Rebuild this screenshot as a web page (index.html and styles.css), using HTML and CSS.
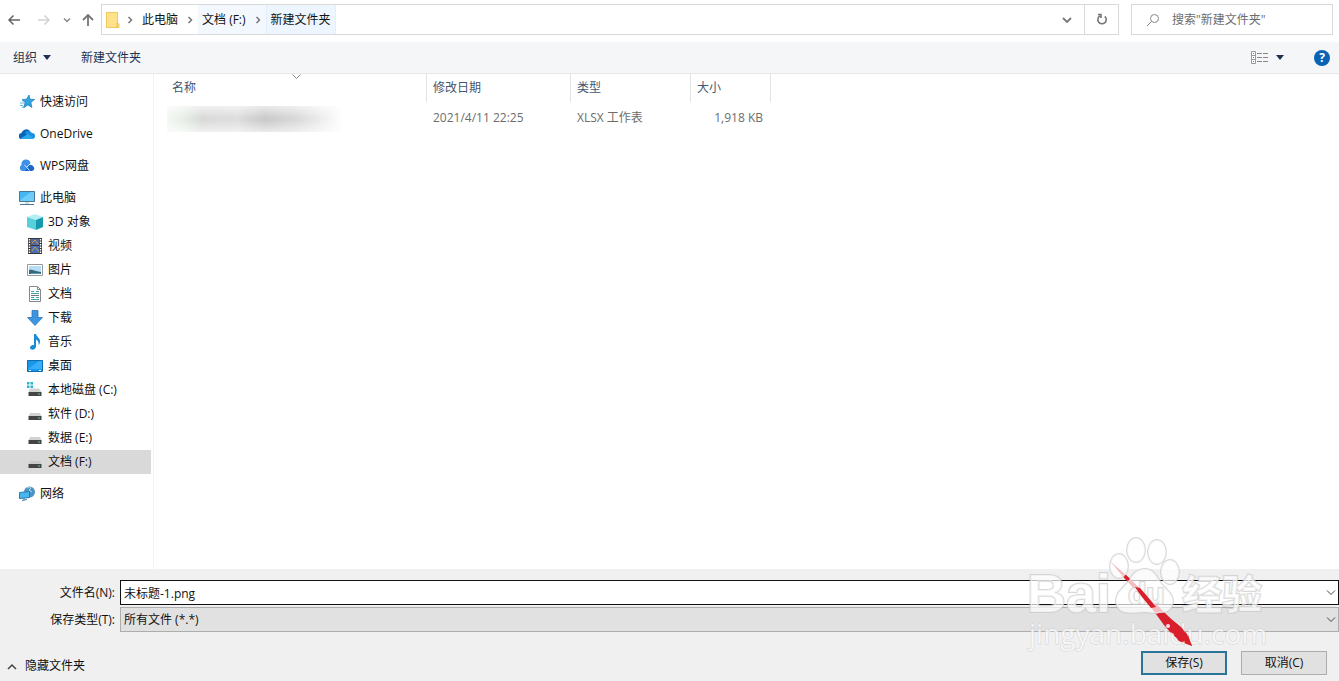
FILE: index.html
```html
<!DOCTYPE html>
<html lang="zh-CN">
<head>
    <meta charset="UTF-8">
    <meta name="viewport" content="width=device-width, initial-scale=1.0">
    <title>另存为</title>
    <link rel="stylesheet" href="styles.css">
</head>
<body>
    <header class="nav-bar">
        <div class="nav-buttons">
            <button class="icon-btn" aria-label="后退"><svg width="14" height="14" viewBox="0 0 14 14"><path d="M13 7H2M6.500 2.500L2 7l4.500 4.500" fill="none" stroke="#666" stroke-width="1.500"/></svg></button>
            <button class="icon-btn" aria-label="前进"><svg width="14" height="14" viewBox="0 0 14 14"><path d="M1 7h11M7.500 2.500L12 7l-4.500 4.500" fill="none" stroke="#d2d2d2" stroke-width="1.500"/></svg></button>
            <button class="icon-btn small" aria-label="最近浏览的位置"><svg width="8" height="8" viewBox="0 0 8 8"><path d="M1 2.500l3 3 3-3" fill="none" stroke="#888" stroke-width="1.500"/></svg></button>
            <button class="icon-btn" aria-label="上移"><svg width="14" height="14" viewBox="0 0 14 14"><path d="M7 13V2M2 7l5-5 5 5" fill="none" stroke="#777" stroke-width="1.800"/></svg></button>
        </div>
        <div class="address">
            <svg class="folder" width="14" height="18" viewBox="0 0 14 18"><path d="M.5 1.500h11v10.500l1.500 1v3.500H.5z" fill="#ffe28a" stroke="#eec85c"/><path d="M11 12v4.500" stroke="#e0b84e"/></svg>
            <nav class="crumbs">
                <svg class="sep" width="6" height="8" viewBox="0 0 6 8"><path d="M1.500 1l3 3-3 3" fill="none" stroke="#777" stroke-width="1.500"/></svg>
                <button class="crumb">此电脑</button>
                <svg class="sep" width="6" height="8" viewBox="0 0 6 8"><path d="M1.500 1l3 3-3 3" fill="none" stroke="#777" stroke-width="1.500"/></svg>
                <button class="crumb lit">文档 (F:)</button>
                <span class="sep-box"><svg width="6" height="8" viewBox="0 0 6 8"><path d="M1.500 1l3 3-3 3" fill="none" stroke="#777" stroke-width="1.500"/></svg></span>
                <button class="crumb active">新建文件夹</button>
            </nav>
            <button class="addr-drop" aria-label="以前的位置"><svg width="10" height="8" viewBox="0 0 10 8"><path d="M1 2l4 4 4-4" fill="none" stroke="#777" stroke-width="1.800"/></svg></button>
            <button class="refresh" aria-label="刷新"><svg width="12" height="13" viewBox="0 0 12 13"><path d="M8.800 3.400A4.200 4.200 0 1 1 4 2.900M2 1.500h3v3.500" fill="none" stroke="#777" stroke-width="1.600"/></svg></button>
        </div>
        <label class="search">
            <svg width="14" height="14" viewBox="0 0 14 14"><circle cx="8.500" cy="5.500" r="4" fill="none" stroke="#888"/><path d="M5.500 8.500L1 13" stroke="#888"/></svg>
            <input type="text" placeholder='搜索"新建文件夹"' aria-label="搜索">
        </label>
    </header>

    <div class="toolbar">
        <button class="tool">组织 <svg width="8" height="5" viewBox="0 0 8 5"><path d="M0 0h8L4 5z" fill="#1e3250"/></svg></button>
        <button class="tool">新建文件夹</button>
        <span class="spacer"></span>
        <button class="tool view" aria-label="更改视图">
            <svg width="17" height="13" viewBox="0 0 17 13"><path d="M.5.500h4v12h-4zM.5 4.500h4M.5 8.500h4" fill="#fff" stroke="#999"/><path d="M2 2.500h1M2 6.500h1M2 10.500h1" stroke="#777"/><path d="M6 2.500h5M12 2.500h5M6 6.500h5M12 6.500h5M6 10.500h5M12 10.500h5" stroke="#888"/></svg>
            <svg width="8" height="5" viewBox="0 0 8 5"><path d="M0 0h8L4 5z" fill="#1e3250"/></svg>
        </button>
        <button class="help" aria-label="帮助">?</button>
    </div>

    <main class="content">
        <aside class="sidebar">
            <ul class="group">
                <li><a class="place" href="#"><svg width="16" height="16" viewBox="0 0 16 16"><path d="M10 1l1 4.200 4.700.3-3.800 2.800 1 5.200-4-2.600-4.200 2.800 1.400-5.100L3 5.700l4.500-.5z" fill="#2fa4e0" stroke="#1778b5" stroke-width=".7"/><path d="M1 9h4M1 11.500h3M3 14l2-2" stroke="#62bce8"/></svg>快速访问</a></li>
            </ul>
            <ul class="group">
                <li><a class="place" href="#"><svg width="16" height="16" viewBox="0 0 16 16"><path d="M3 13a3 3 0 0 1-.5-6A5 5 0 0 1 11 5l2 8z" fill="#0b63b8"/><path d="M6 6a5 5 0 0 1 7 1 3 3 0 0 1 0 6H9z" fill="#1b91df"/><path d="M2 12l7-4 5.500 4.300-1.500.7H3z" fill="#29a8ea"/></svg>OneDrive</a></li>
            </ul>
            <ul class="group">
                <li><a class="place" href="#"><svg width="16" height="16" viewBox="0 0 16 16"><path d="M3 13a3.300 3.300 0 0 1-.5-6 4.500 4.500 0 0 1 9-2L7 13z" fill="#3d91ec"/><path d="M6 13l3-5a3.500 3.500 0 0 1 6 1.500A2.500 2.500 0 0 1 13 13z" fill="#1769c9"/><path d="M5.500 7l5 5.500M8 9l3-3" fill="none" stroke="#d8edff"/></svg>WPS网盘</a></li>
            </ul>
            <ul class="group">
                <li><a class="place" href="#"><svg width="16" height="16" viewBox="0 0 16 16"><path d="M.5 1.500h15v10H.5z" fill="#43b7f2" stroke="#477994"/><path d="M1 10L12 2h3v9H1z" fill="#6dccfa"/><path d="M1 14.500h14" stroke="#477994"/><path d="M6 13h4" stroke="#a8b9c4"/></svg>此电脑</a></li>
                <li><a class="place child" href="#"><svg width="16" height="16" viewBox="0 0 16 16"><path d="M0 3l8-3 8 3-7 3z" fill="#b3eef3"/><path d="M0 3l9 3v10l-9-3z" fill="#57d0dc"/><path d="M16 3L9 6v10l7-3z" fill="#1698ad"/></svg>3D 对象</a></li>
                <li><a class="place child" href="#"><svg width="16" height="16" viewBox="0 0 16 16"><path d="M1 0h14v16H1z" fill="#38363b"/><path d="M4 1h8v6H4z" fill="#58669e"/><path d="M4 8h8v7H4z" fill="#486dba"/><path d="M5 5l3-3 3 4M5 13l3-4 4 5" stroke="#c7a245" fill="none"/><path d="M2.500 1v14M13.500 1v14" stroke="#fff" stroke-width="1.500" stroke-dasharray="1.500 1"/></svg>视频</a></li>
                <li><a class="place child" href="#"><svg width="16" height="16" viewBox="0 0 16 16"><path d="M.5 2.500h15v11H.5z" fill="#fff" stroke="#999"/><path d="M2 4h12v8H2z" fill="#b5ddf5"/><path d="M2 8c3-1 5 1 12 2v2H2z" fill="#386879"/><path d="M4 11.500h9" stroke="#5599b5"/></svg>图片</a></li>
                <li><a class="place child" href="#"><svg width="16" height="16" viewBox="0 0 16 16"><path d="M2.500.500h8l3 3v12h-11z" fill="#fff" stroke="#888"/><path d="M10.500.500v3h3" fill="none" stroke="#888"/><path d="M4 5.500h3M9 5.500h3M4 7.500h8M4 11.500h3M9 11.500h3M4 13.500h8" stroke="#47a0ac"/><path d="M4 9.500h8" stroke="#777"/></svg>文档</a></li>
                <li><a class="place child" href="#"><svg width="16" height="16" viewBox="0 0 16 16"><path d="M5 .500h6v7h4.500L8 15.500.5 7.500H5z" fill="#3e94df" stroke="#2777be" stroke-width=".8"/></svg>下载</a></li>
                <li><a class="place child" href="#"><svg width="16" height="16" viewBox="0 0 16 16"><path d="M7 0h2c.5 3 4.500 4 4 8-.2 1.500-1 2.500-1.500 3 .5-3-1-5-2.500-5.500v7C9 15 6.500 16 4.500 15.500S2.500 12 5 11.200c1-.4 1.500-.2 2 0z" fill="#178bd8"/></svg>音乐</a></li>
                <li><a class="place child" href="#"><svg width="16" height="16" viewBox="0 0 16 16"><path d="M.5 2.500h15v11H.5z" fill="#1997e8" stroke="#116cae"/><path d="M1 11L12 3h3v8z" fill="#36aefa"/><path d="M2 12.500h2M12 12.500h2" stroke="#fff"/></svg>桌面</a></li>
                <li><a class="place child" href="#"><svg width="16" height="16" viewBox="0 0 16 16"><path d="M3 6.500h9l2.500 3.500H1.500z" fill="#d2d2d2"/><path d="M0 0h2.500v2.500H0zM3.500 0H6v2.500H3.500zM0 3.500h2.500V6H0zM3.500 3.500H6V6H3.500z" fill="#24b5d0"/><path d="M1.500 10h13v4h-13z" fill="#444"/><path d="M11 12h2" stroke="#52df79"/></svg>本地磁盘 (C:)</a></li>
                <li><a class="place child" href="#"><svg width="16" height="16" viewBox="0 0 16 16"><path d="M3 7h10l1.500 3.500h-13z" fill="#d2d2d2"/><path d="M1.500 10h13v4h-13z" fill="#444"/><path d="M11 12h2" stroke="#52df79"/></svg>软件 (D:)</a></li>
                <li><a class="place child" href="#"><svg width="16" height="16" viewBox="0 0 16 16"><path d="M3 7h10l1.500 3.500h-13z" fill="#d2d2d2"/><path d="M1.500 10h13v4h-13z" fill="#444"/><path d="M11 12h2" stroke="#52df79"/></svg>数据 (E:)</a></li>
                <li><a class="place child selected" href="#"><svg width="16" height="16" viewBox="0 0 16 16"><path d="M3 7h10l1.500 3.500h-13z" fill="#cacaca"/><path d="M1.500 10h13v4h-13z" fill="#444"/><path d="M11 12h2" stroke="#52df79"/></svg>文档 (F:)</a></li>
            </ul>
            <ul class="group">
                <li><a class="place" href="#"><svg width="16" height="16" viewBox="0 0 16 16"><circle cx="10.500" cy="6" r="5.500" fill="#4d94c3"/><path d="M8 2c2-1 3-1 4 0l-2 2 3 2" stroke="#b5daed" fill="none"/><path d="M.5 6.500l10-1v6l-10 1z" fill="#48b7f0" stroke="#287dac"/><path d="M3 14.500l5-1M5 12v2" stroke="#477d9c"/></svg>网络</a></li>
            </ul>
        </aside>

        <section class="files">
            <svg class="sort" width="9" height="5" viewBox="0 0 9 5"><path d="M.5.500l4 4 4-4" fill="none" stroke="#888"/></svg>
            <table class="file-table">
                <thead>
                    <tr><th class="col-name">名称</th><th class="col-date">修改日期</th><th class="col-type">类型</th><th class="col-size">大小</th></tr>
                </thead>
                <tbody>
                    <tr><td class="name-cell"><div class="smudge"></div></td><td>2021/4/11 22:25</td><td>XLSX 工作表</td><td class="size">1,918 KB</td></tr>
                </tbody>
            </table>
        </section>
    </main>

    <footer class="save-panel">
        <div class="field">
            <label for="filename">文件名(N):</label>
            <div class="combo">
                <input type="text" id="filename" value="未标题-1.png">
                <svg class="chev" width="10" height="6" viewBox="0 0 10 6"><path d="M1 .500l4 4 4-4" fill="none" stroke="#444"/></svg>
            </div>
        </div>
        <div class="field">
            <label for="filetype">保存类型(T):</label>
            <div class="combo">
                <select id="filetype"><option>所有文件 (*.*)</option></select>
                <svg class="chev" width="10" height="6" viewBox="0 0 10 6"><path d="M1 .500l4 4 4-4" fill="none" stroke="#444"/></svg>
            </div>
        </div>
        <div class="actions">
            <button class="hide-folders"><svg width="10" height="7" viewBox="0 0 10 7"><path d="M1 6l4-4 4 4" fill="none" stroke="#444" stroke-width="1.500"/></svg>隐藏文件夹</button>
            <span class="spacer"></span>
            <button class="btn save">保存(S)</button>
            <button class="btn">取消(C)</button>
        </div>
    </footer>

    <svg class="watermark" width="329" height="151" viewBox="0 0 329 151">
        <path class="arrow" d="M100 31L117 46 143 71 161 89 172 98 177 104 182 116 171 112 161 103 154 95 140 76 115 49z"/>
        <g class="mark">
            <ellipse cx="126" cy="20" rx="9" ry="12"/>
            <ellipse cx="147" cy="22" rx="9" ry="12"/>
            <ellipse cx="109" cy="36" rx="9" ry="12"/>
            <ellipse cx="160" cy="42" rx="9" ry="12"/>
            <path d="M135 39c-10 0-13 7-18 14-6 7-12 11-11 19 2 13 13 11 29 10 14 2 27 2 28-10 1-8-7-12-12-19-5-8-8-14-16-14z"/>
            <text class="bai" x="17" y="82">Bai</text>
            <text class="du" x="118" y="74">du</text>
            <text class="jy" x="172" y="79">经验</text>
            <text class="url" x="19" y="114">jingyan.baidu.com</text>
        </g>
        <path class="arrow" d="M114 46l2-1 4 4-2 2zM125 57l5 1 12 14 4 5-5 1-9-11zM148 83l6 0 7 6 11 9 4 6-1 3-8-1-6-4-7-7z"/>
        <circle class="arrow" cx="172" cy="107" r="5"/>
        <path class="arrow" d="M178 105l4 11-7-4z"/>
        <circle cx="158" cy="96" r="2" fill="#fde"/>
    </svg>
</body>
</html>
```
FILE: styles.css
```css
* {
    box-sizing: border-box;
}
body {
    margin: 0;
    min-height: 100vh;
    display: flex;
    flex-direction: column;
    position: relative;
    background: #fff;
    color: #111;
}
body, button, input, select {
    font-family: "Open Sans", "Noto Sans CJK SC", sans-serif;
    font-size: 12px;
    line-height: 16px;
}
button {
    border: none;
    background: none;
    padding: 0;
    color: inherit;
}
svg {
    flex: none;
}
.spacer {
    flex: 1;
}

/* navigation */
.nav-bar {
    display: flex;
    padding: 4px 6px 7px;
}
.nav-buttons {
    display: flex;
    align-items: center;
    width: 95px;
    gap: 10px;
    padding-left: 1px;
}
.icon-btn {
    display: flex;
    justify-content: center;
    width: 14px;
}
.icon-btn:nth-child(2) {
    margin-left: 6px;
}
.icon-btn.small {
    width: 8px;
    margin-left: 2px;
}
.address {
    flex: 1;
    display: flex;
    align-items: center;
    height: 31px;
    border: 1px solid #d9d9d9;
    padding-left: 4px;
}
.folder {
    margin-right: 2px;
}
.crumbs {
    flex: 1;
    display: flex;
    align-items: center;
    align-self: stretch;
}
.sep {
    margin: 0 5px;
}
.crumb {
    align-self: stretch;
    padding: 0 4px;
}
.crumb.lit, .sep-box {
    background: #f2f8fe;
}
.sep-box {
    display: flex;
    align-items: center;
    justify-content: center;
    align-self: stretch;
    width: 16px;
}
.crumb.active {
    background: #edf6fe;
    border-left: 1px solid #e2effa;
    border-right: 1px solid #e2effa;
}
.addr-drop, .refresh {
    display: flex;
    align-items: center;
    justify-content: center;
    align-self: stretch;
    width: 34px;
}
.refresh {
    border-left: 1px solid #d9d9d9;
}
.search {
    display: flex;
    align-items: center;
    gap: 12px;
    width: 202px;
    height: 31px;
    margin-left: 12px;
    padding-left: 14px;
    border: 1px solid #d9d9d9;
}
.search input {
    flex: 1;
    min-width: 0;
    border: none;
    padding: 0;
    outline: none;
}
.search input::placeholder {
    color: #6d6d6d;
}

/* command bar */
.toolbar {
    display: flex;
    align-items: center;
    height: 32px;
    padding: 0 9px 0 13px;
    background: #f5f6f7;
    border-bottom: 1px solid #e6e8ec;
    color: #1e3250;
}
.tool {
    display: flex;
    align-items: center;
    gap: 6px;
    margin-right: 30px;
}
.view {
    gap: 8px;
}
.help {
    width: 16px;
    height: 16px;
    border-radius: 50%;
    background: #0863b5;
    color: #fff;
    font-weight: bold;
}

/* places and files */
.content {
    flex: 1;
    display: flex;
}
.sidebar {
    width: 154px;
    padding: 16px 2px 16px 0;
    border-right: 1px solid #f2f2f2;
}
.group {
    list-style: none;
    margin: 0 0 8px;
    padding: 0;
}
.place {
    display: flex;
    align-items: center;
    gap: 5px;
    height: 24px;
    padding-left: 19px;
    color: #111;
    text-decoration: none;
}
.child {
    padding-left: 27px;
}
.selected {
    background: #d9d9d9;
}
.files {
    flex: 1;
    position: relative;
}
.sort {
    position: absolute;
    left: 138px;
    top: 0;
}
.file-table {
    width: 617px;
    table-layout: fixed;
    border-collapse: separate;
    border-spacing: 0;
}
.file-table th {
    height: 28px;
    padding: 0 6px;
    border-right: 1px solid #e3e3e3;
    text-align: left;
    font-weight: normal;
    color: #45566e;
}
.file-table td {
    height: 32px;
    padding: 0 6px;
    color: #6d6d6d;
}
.file-table .col-name {
    width: 273px;
    padding-left: 18px;
}
.col-date {
    width: 144px;
}
.col-type {
    width: 120px;
}
.file-table .size {
    padding-right: 8px;
    text-align: right;
}
.file-table .name-cell {
    padding: 2px 0 0 13px;
}
.smudge {
    width: 180px;
    height: 26px;
    background:
        linear-gradient(to bottom, rgba(255, 255, 255, 0.6), transparent 45%, transparent 55%, rgba(255, 255, 255, 0.6)),
        linear-gradient(to right, #f5f7f5, #e8f0e7 16px, #d9dad9 36px, #dedede 70px, #cacaca 98px, #dadada 130px, #fff 176px);
}

/* bottom panel */
.save-panel {
    display: flex;
    flex-direction: column;
    gap: 2px;
    padding-top: 11px;
    background: #f0f0f0;
}
.field {
    display: flex;
    align-items: center;
}
.field label {
    width: 120px;
    padding-right: 5px;
    text-align: right;
}
.combo {
    flex: 1;
    position: relative;
}
.combo input, .combo select {
    display: block;
    width: 100%;
    height: 25px;
    padding: 0 3px;
    border: 1px solid #111;
    border-radius: 0;
    background: #fff;
    color: #111;
    outline: none;
}
.combo select {
    appearance: none;
    border-color: #adadad;
    background: #e1e1e1;
}
.chev {
    position: absolute;
    right: 3px;
    top: 10px;
    pointer-events: none;
}
.actions {
    display: flex;
    align-items: center;
    gap: 14px;
    padding: 17px 12px 6px 7px;
}
.hide-folders {
    display: flex;
    align-items: center;
    gap: 8px;
    padding-top: 6px;
}
.btn {
    width: 86px;
    height: 24px;
    border: 1px solid #adadad;
    background: #e1e1e1;
}
.btn.save {
    border: 2px solid #2a7598;
}

/* arrow and site mark over the panel */
.watermark {
    position: absolute;
    right: 0;
    bottom: 0;
    pointer-events: none;
}
.arrow {
    fill: #d91f2b;
}
.mark {
    fill: #fff;
    fill-opacity: 0.7;
    stroke: #c8c8c8;
    stroke-opacity: 0.7;
    stroke-width: 2px;
    paint-order: stroke;
}
.bai {
    font: bold 54px "Liberation Sans", sans-serif;
}
.du {
    font: bold 30px "Liberation Sans", sans-serif;
}
.jy {
    font: bold 40px "Noto Sans CJK SC", sans-serif;
}
.url {
    font: 28px "Open Sans", sans-serif;
    stroke-width: 1px;
}
```
